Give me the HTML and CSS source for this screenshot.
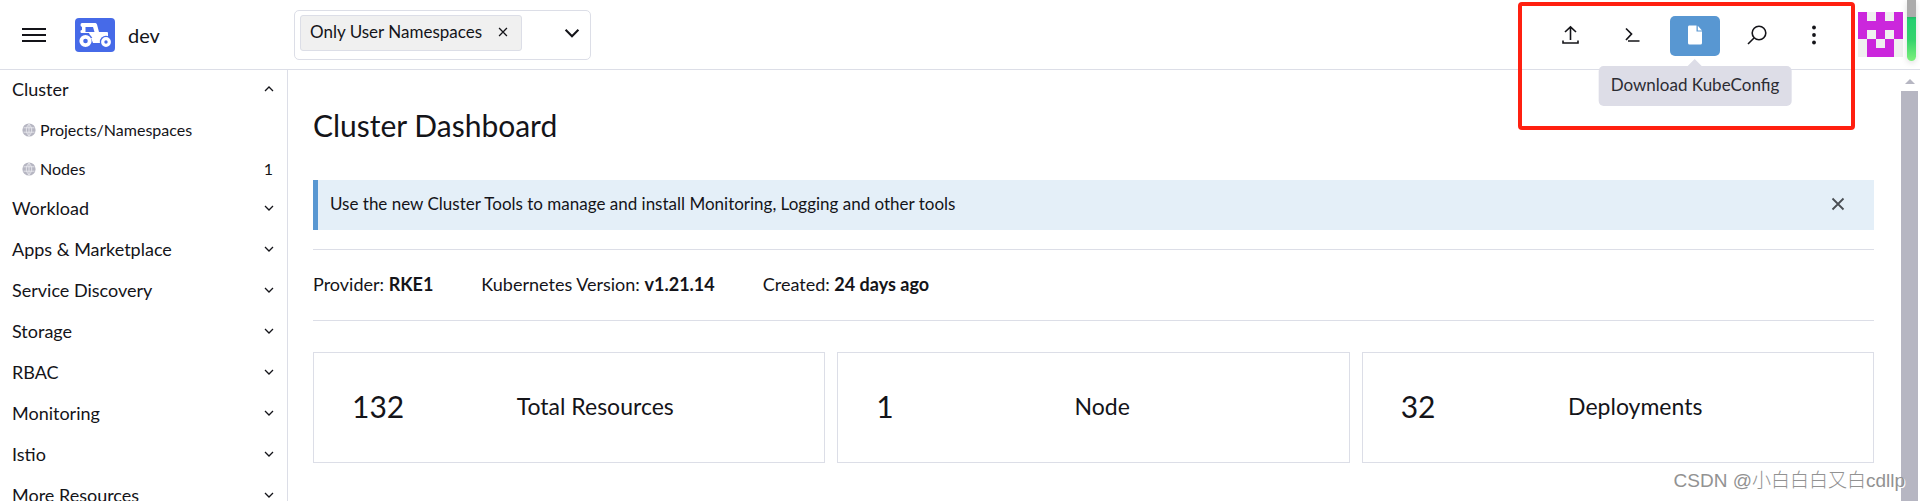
FILE: index.html
```html
<!DOCTYPE html>
<html lang="en">
<head>
  <meta charset="UTF-8">
  <meta name="viewport" content="width=device-width, initial-scale=1.0">
  <title>Cluster Dashboard</title>
  <link rel="stylesheet" href="styles.css">
</head>
<body>

  <!-- Shared icons -->
  <svg class="sprite" aria-hidden="true">
    <symbol id="chevron" viewBox="0 0 10 10"><path d="M1 3 L5 7 L9 3" fill="none" stroke="currentColor" stroke-width="1.3"/></symbol>
    <symbol id="close" viewBox="0 0 14 14"><path d="M1.5 1.5 L12.5 12.5 M12.5 1.5 L1.5 12.5" fill="none" stroke="currentColor" stroke-width="1.8"/></symbol>
    <symbol id="globe" viewBox="0 0 14 14">
      <circle cx="7" cy="7" r="6.6" fill="#b6b6c2"/>
      <path d="M1.500 4.800 H12.500 M1.500 9.200 H12.500 M7 1 V13 M7 1.200 C3.400 4.500 3.400 9.500 7 12.800 C10.600 9.500 10.600 4.500 7 1.200" fill="none" stroke="#ededf2" stroke-width="0.8"/>
    </symbol>
  </svg>

  <header class="header">
    <button class="menu-button" aria-label="Menu">
      <svg width="24" height="18" viewBox="0 0 24 18"><path d="M0 3 H24 M0 9 H24 M0 15 H24" stroke="#141419" stroke-width="2.2"/></svg>
    </button>
    <a class="brand" href="#">
      <svg width="40" height="34" viewBox="0 0 40 34">
        <rect width="40" height="34" rx="4" fill="#466ae8"/>
        <path d="M7 5 H20.500 Q21.500 5 22 6.500 L24 14 H32 Q33 14 33 15 V22 H17 L14 15 H6.500 Q5.500 15 5.500 14 V13 Q5.500 12 7 12 V9 Q5.500 8.500 5.500 7 Q5.500 5 7 5 Z" fill="#fff"/>
        <path d="M10.500 9 H18 L19.500 14 H10.500 Z" fill="#466ae8"/>
        <circle cx="10.500" cy="23" r="7.500" fill="#466ae8"/>
        <path d="M16 20 H30 V25 H18 Z" fill="#fff"/>
        <circle cx="31" cy="24" r="6.200" fill="#466ae8"/>
        <circle cx="10.500" cy="23" r="4.200" fill="none" stroke="#fff" stroke-width="3.800"/>
        <circle cx="31" cy="24" r="3.300" fill="none" stroke="#fff" stroke-width="3.200"/>
      </svg>
      <span>dev</span>
    </a>
    <div class="ns-filter">
      <span class="tag">Only User Namespaces
        <button class="tag-remove" aria-label="Remove"><svg width="10" height="10"><use href="#close"/></svg></button>
      </span>
      <button class="ns-toggle" aria-label="Open namespaces"><svg width="16" height="16"><use href="#chevron"/></svg></button>
    </div>

    <div class="actions">
      <button class="action" aria-label="Import YAML">
        <svg width="20" height="20" viewBox="0 0 20 20" fill="none" stroke="#141419" stroke-width="1.600"><path d="M9.500 15 V2 M4 7 L9.500 1.800 L15 7 M2 15.500 V18 H17 V15.500"/></svg>
      </button>
      <button class="action" aria-label="Kubectl Shell">
        <svg width="20" height="20" viewBox="0 0 20 20" fill="none" stroke="#141419" stroke-width="1.700"><path d="M3 3.500 L8.500 9 L3 15 M5 16 H16.500"/></svg>
      </button>
      <div class="tooltip-wrap">
        <button class="action active" aria-describedby="kube-tip" aria-label="Download KubeConfig">
          <svg width="20" height="20" viewBox="0 0 20 20"><path d="M4 .5 H11.500 V6.500 H17 V18 Q17 19.500 15.500 19.500 H4.500 Q3 19.500 3 18 V2 Q3 .5 4 .5 Z M12.800 .8 L17 5.400 H12.800 Z" fill="#fff"/></svg>
        </button>
        <div class="tooltip" id="kube-tip" role="tooltip">Download KubeConfig</div>
      </div>
      <button class="action" aria-label="Search">
        <svg width="20" height="20" viewBox="0 0 20 20" fill="none" stroke="#141419" stroke-width="1.600"><circle cx="12" cy="8" r="6.800"/><path d="M7 13 L1 19"/></svg>
      </button>
      <button class="action more" aria-label="More actions">
        <svg width="20" height="20" viewBox="0 0 20 20" fill="#141419"><circle cx="10" cy="2.500" r="1.900"/><circle cx="10" cy="10" r="1.900"/><circle cx="10" cy="17.500" r="1.900"/></svg>
      </button>
    </div>
    <button class="avatar" aria-label="User">
      <svg width="45" height="45" viewBox="0 0 5 5" shape-rendering="crispEdges">
        <rect width="5" height="5" fill="#f0f0f0"/>
        <path d="M0 0 H1 V1 H2 V0 H3 V1 H4 V0 H5 V3 H4 V5 H1 V3 H0 Z" fill="#cb27dc"/>
        <path d="M1 2 H2 V3 H1 Z M3 2 H4 V3 H3 Z M2 3 H3 V4 H2 Z" fill="#f0f0f0"/>
      </svg>
    </button>
  </header>

  <div class="layout">
    <nav class="side-nav">
      <button class="group open">Cluster <svg width="10" height="10"><use href="#chevron"/></svg></button>
      <a class="item" href="#"><svg width="14" height="14"><use href="#globe"/></svg>Projects/Namespaces</a>
      <a class="item" href="#"><svg width="14" height="14"><use href="#globe"/></svg>Nodes<span class="count">1</span></a>
      <button class="group">Workload <svg width="10" height="10"><use href="#chevron"/></svg></button>
      <button class="group">Apps &amp; Marketplace <svg width="10" height="10"><use href="#chevron"/></svg></button>
      <button class="group">Service Discovery <svg width="10" height="10"><use href="#chevron"/></svg></button>
      <button class="group">Storage <svg width="10" height="10"><use href="#chevron"/></svg></button>
      <button class="group">RBAC <svg width="10" height="10"><use href="#chevron"/></svg></button>
      <button class="group">Monitoring <svg width="10" height="10"><use href="#chevron"/></svg></button>
      <button class="group">Istio <svg width="10" height="10"><use href="#chevron"/></svg></button>
      <button class="group">More Resources <svg width="10" height="10"><use href="#chevron"/></svg></button>
    </nav>

    <main class="main">
      <h1>Cluster Dashboard</h1>
      <div class="banner">
        <span>Use the new Cluster Tools to manage and install Monitoring, Logging and other tools</span>
        <button class="banner-close" aria-label="Close"><svg width="14" height="14"><use href="#close"/></svg></button>
      </div>
      <div class="glance">
        <div>Provider: <b>RKE1</b></div>
        <div>Kubernetes Version: <b>v1.21.14</b></div>
        <div>Created: <b>24 days ago</b></div>
      </div>
      <div class="cards">
        <div class="card"><span class="number">132</span><span class="label">Total Resources</span></div>
        <div class="card"><span class="number">1</span><span class="label">Node</span></div>
        <div class="card"><span class="number">32</span><span class="label">Deployments</span></div>
      </div>
    </main>

    <div class="scrollbar">
      <span class="scroll-arrow"></span>
      <span class="scroll-thumb"></span>
    </div>
  </div>

  <!-- Overlays -->
  <div class="highlight"></div>
  <div class="meter"></div>
  <div class="watermark">CSDN @小白白白又白cdllp</div>

</body>
</html>
```
FILE: styles.css
```css
* {
  box-sizing: border-box;
}

body {
  margin: 0;
  height: 100vh;
  display: flex;
  flex-direction: column;
  overflow: hidden;
  position: relative;
  font-family: Lato, "Noto Sans CJK SC", sans-serif;
  font-size: 18px;
  line-height: 22px;
  color: #141419;
  background-color: #fff;
}

button {
  font: inherit;
  color: inherit;
  background: none;
  border: none;
  padding: 0;
  cursor: pointer;
}

a {
  color: inherit;
  text-decoration: none;
}

svg {
  display: block;
  flex-shrink: 0;
}

.sprite {
  position: absolute;
  width: 0;
  height: 0;
}

/* Header */
.header {
  display: flex;
  align-items: center;
  flex-shrink: 0;
  height: 70px;
  padding: 0 17px 0 22px;
  border-bottom: 1px solid #dcdee7;
}

.brand {
  display: flex;
  align-items: center;
  gap: 13px;
  width: 190px;
  margin: 0 0 0 29px;
  font-size: 20px;
}

.ns-filter {
  display: flex;
  align-items: center;
  justify-content: space-between;
  width: 297px;
  height: 50px;
  margin-left: 29px;
  padding: 0 10px 3px 5px;
  border: 1px solid #dcdee7;
  border-radius: 5px;
}

.tag {
  display: flex;
  align-items: center;
  gap: 16px;
  height: 36px;
  padding: 0 13px 2px 9px;
  border: 1px solid #dcdee7;
  border-radius: 3px;
  background-color: #f0f0f0;
  font-size: 17px;
}

.actions {
  display: flex;
  align-items: center;
  gap: 12px;
  margin-left: auto;
  margin-right: 24px;
  padding-top: 2px;
}

.action {
  display: flex;
  align-items: center;
  justify-content: center;
  width: 50px;
  height: 40px;
  padding-bottom: 2px;
  border-radius: 5px;
}

.active {
  background-color: #5897d2;
}

.more {
  width: 40px;
}

.tooltip-wrap {
  position: relative;
}

.tooltip {
  position: absolute;
  top: 50px;
  left: 50%;
  transform: translateX(-50%);
  padding: 8px 12px 10px;
  border-radius: 5px;
  background-color: #dddde7;
  color: #2c2c33;
  font-size: 17px;
  white-space: nowrap;
  z-index: 2;
}

.tooltip::before {
  content: "";
  position: absolute;
  top: -7px;
  left: 50%;
  margin-left: -7px;
  border: 7px solid transparent;
  border-top: none;
  border-bottom-color: #dddde7;
}

/* Page body */
.layout {
  display: flex;
  flex: 1;
  min-height: 0;
}

.side-nav {
  display: flex;
  flex-direction: column;
  flex-shrink: 0;
  width: 288px;
  overflow: hidden;
  border-right: 1px solid #dcdee7;
}

.group {
  display: flex;
  align-items: center;
  justify-content: space-between;
  flex-shrink: 0;
  height: 41px;
  padding: 0 13px 2px 12px;
}

.open {
  height: 40px;
}

.open svg {
  transform: rotate(180deg);
}

.item {
  display: flex;
  align-items: center;
  flex-shrink: 0;
  gap: 4px;
  height: 39px;
  padding: 0 14px 0 22px;
  font-size: 16px;
}

.count {
  margin-left: auto;
}

.main {
  flex: 1;
  padding: 35px 27px 0 25px;
}

h1 {
  margin: 0 0 35px;
  font-size: 30px;
  line-height: 40px;
  font-weight: 400;
}

.banner {
  display: flex;
  align-items: center;
  justify-content: space-between;
  height: 50px;
  padding: 0 29px 2px 12px;
  border-left: 5px solid #5897d2;
  background-color: #e4eff8;
  font-size: 17px;
}

.banner-close {
  color: #4a4e54;
}

.glance {
  display: flex;
  gap: 48px;
  margin: 19px 0 31px;
  padding: 23px 0 25px;
  border-top: 1px solid #dcdee7;
  border-bottom: 1px solid #dcdee7;
}

.cards {
  display: grid;
  grid-template-columns: repeat(3, 1fr);
  gap: 12px;
}

.card {
  display: flex;
  align-items: center;
  height: 111px;
  padding: 0 38px 3px;
  border: 1px solid #dcdee7;
}

.number {
  font-size: 30px;
}

.label {
  flex: 1;
  text-align: center;
  font-size: 23px;
}

.scrollbar {
  display: flex;
  flex-direction: column;
  align-items: center;
  width: 19px;
  padding: 9px 2px 0 0;
}

.scroll-arrow {
  border: 5px solid transparent;
  border-top: none;
  border-bottom-color: #b6b6c2;
}

.scroll-thumb {
  flex: 1;
  width: 17px;
  margin-top: 7px;
  background-color: #b6b6c2;
}

/* Overlays */
.highlight {
  position: absolute;
  top: 2px;
  right: 65px;
  width: 337px;
  height: 128px;
  border: 4px solid #ff2010;
  border-radius: 4px;
  pointer-events: none;
}

.meter {
  position: absolute;
  top: 0;
  right: 4px;
  width: 9px;
  height: 61px;
  border-radius: 0 0 5px 5px;
  background: linear-gradient(#ababab 17px, #1fb864 17px, #25cf70 20px, #35d36c 40px, #7df07c);
  box-shadow: 0 2px 6px #00000022;
}

.watermark {
  position: absolute;
  right: 15px;
  bottom: 8px;
  font-family: "Liberation Sans", "Noto Sans CJK SC", sans-serif;
  font-size: 19px;
  font-weight: 300;
  line-height: 24px;
  color: #929292;
  text-shadow: 1px 1px 0 #fff;
}
```
